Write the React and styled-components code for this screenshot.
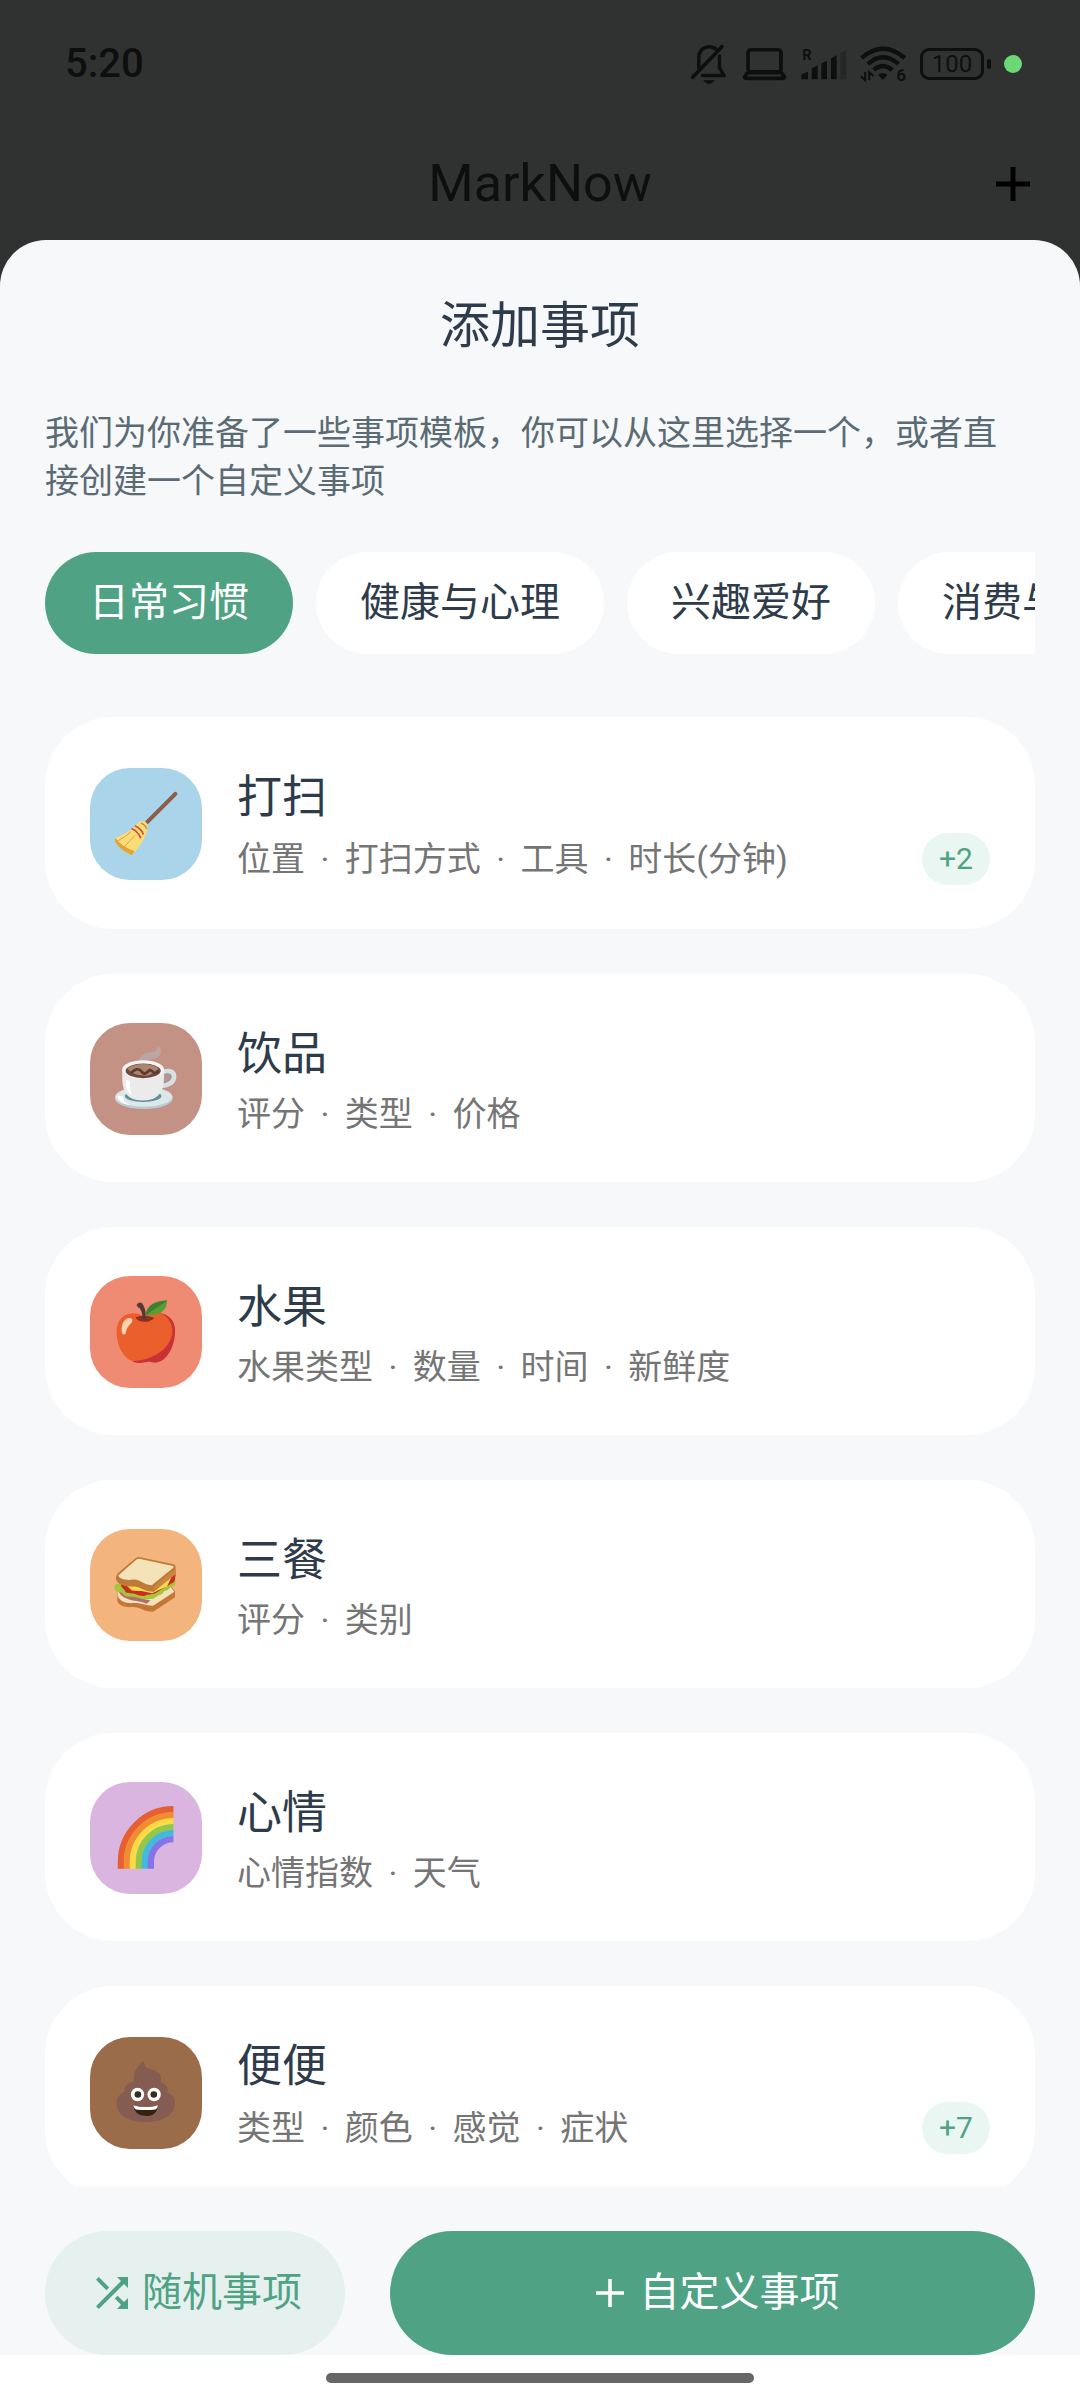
import React, { useState } from 'react';
import styled, { createGlobalStyle, ThemeProvider } from 'styled-components';

const theme = {
  backdrop: '#303231',
  ink: '#0d0f0f',
  sheet: '#f6f8fa',
  card: '#ffffff',
  text: '#2d3b4a',
  note: '#5b6b74',
  muted: '#757575',
  green: '#4fa384',
  greenSoft: '#e6f1ef',
  greenPale: '#eaf6f2',
};

const GlobalStyle = createGlobalStyle`
  * {
    box-sizing: border-box;
    margin: 0;
    padding: 0;
  }

  body {
    font-family: Roboto, 'Noto Sans CJK SC', sans-serif;
    background: #ffffff;
  }

  button {
    border: none;
    background: none;
    font-family: inherit;
    color: inherit;
    cursor: pointer;
  }
`;

const Screen = styled.div`
  width: 100%;
  height: 100vh;
  overflow: hidden;

  display: flex;
  flex-direction: column;

  background: ${(props) => props.theme.backdrop};
  color: ${(props) => props.theme.ink};
`;

const StatusBar = styled.div`
  flex: none;
  height: 128px;
  padding: 0 58px 0 65px;

  display: flex;
  align-items: center;
  justify-content: space-between;
`;

const Clock = styled.time`
  font-size: 40px;
  font-weight: 500;
  line-height: 48px;
`;

const StatusIcons = styled.div`
  display: flex;
  align-items: center;
  gap: 13px;

  svg {
    display: block;
    overflow: visible;
  }
`;

const Battery = styled.div`
  display: flex;
  align-items: center;
  gap: 3px;
`;

const BatteryBody = styled.span`
  width: 64px;
  height: 32px;
  border: 3px solid ${(props) => props.theme.ink};
  border-radius: 9px;

  display: flex;
  align-items: center;
  justify-content: center;

  font-size: 24px;
  line-height: 24px;
`;

const BatteryTip = styled.span`
  width: 4px;
  height: 10px;
  border-radius: 2px;
  background: ${(props) => props.theme.ink};
`;

const ActiveDot = styled.span`
  width: 18px;
  height: 18px;
  border-radius: 50%;
  background: #6bd775;
`;

const AppBar = styled.header`
  flex: none;
  height: 112px;
  padding: 0 43px;

  display: grid;
  grid-template-columns: 1fr auto 1fr;
  align-items: center;

  h1 {
    grid-column: 2;
    font-size: 52px;
    font-weight: 400;
    line-height: 64px;
  }
`;

const AppBarButton = styled.button`
  justify-self: end;
  width: 48px;
  height: 48px;
  color: #000000;

  svg {
    display: block;
  }
`;

const Sheet = styled.main`
  flex: 1;
  min-height: 0;
  padding: 56px 45px 0;
  border-radius: 46px 46px 0 0;

  display: flex;
  flex-direction: column;

  background: ${(props) => props.theme.sheet};
  color: ${(props) => props.theme.text};
`;

const SheetTitle = styled.h2`
  font-size: 50px;
  font-weight: 400;
  line-height: 60px;
  text-align: center;
`;

const SheetNote = styled.p`
  margin-top: 53px;
  padding-right: 8px;

  font-size: 34px;
  line-height: 48px;
  color: ${(props) => props.theme.note};
`;

const Chips = styled.div`
  flex: none;
  margin-top: 47px;

  display: flex;
  gap: 23px;
  overflow-x: auto;
  scrollbar-width: none;
`;

const Chip = styled.button`
  flex: none;
  height: 102px;
  padding: 0 44px;
  border-radius: 51px;

  font-size: 40px;
  line-height: 48px;
  white-space: nowrap;
  color: ${(props) => (props.$active ? '#ffffff' : props.theme.text)};
  background: ${(props) => (props.$active ? props.theme.green : props.theme.card)};
`;

const TemplateList = styled.ul`
  flex: 1;
  min-height: 0;
  margin-top: 63px;

  display: flex;
  flex-direction: column;
  gap: 45px;
  overflow-y: auto;
  scrollbar-width: none;
  list-style: none;
`;

const Card = styled.button`
  width: 100%;
  padding: 46px 45px 44px;
  border-radius: 68px;

  display: flex;
  align-items: center;
  gap: 35px;

  background: ${(props) => props.theme.card};
  text-align: left;
`;

const Tile = styled.span`
  flex: none;
  width: 112px;
  height: 112px;
  border-radius: 40px;
  overflow: hidden;
  background: ${(props) => props.$color};

  svg {
    display: block;
  }
`;

const CardBody = styled.span`
  flex: 1;
  min-width: 0;

  display: flex;
  flex-direction: column;
`;

const CardTitle = styled.span`
  font-size: 45px;
  line-height: 70px;
  color: ${(props) => props.theme.text};
`;

const CardRow = styled.span`
  display: flex;
  align-items: center;
  justify-content: space-between;
`;

const Fields = styled.span`
  font-size: 34px;
  line-height: 48px;
  color: ${(props) => props.theme.muted};
`;

const Dot = styled.span`
  padding: 0 7px;
`;

const More = styled.span`
  min-width: 68px;
  height: 52px;
  padding: 0 16px;
  border-radius: 26px;

  display: flex;
  align-items: center;
  justify-content: center;

  font-size: 30px;
  line-height: 36px;
  color: ${(props) => props.theme.green};
  background: ${(props) => props.theme.greenPale};
`;

const Actions = styled.div`
  flex: none;
  margin-top: 45px;

  display: flex;
  gap: 45px;
`;

const ActionButton = styled.button`
  flex: ${(props) => (props.$primary ? '1' : 'none')};
  height: 124px;
  padding: 0 43px;
  border-radius: 62px;

  display: flex;
  align-items: center;
  justify-content: center;
  gap: 6px;

  font-size: 40px;
  line-height: 48px;
  color: ${(props) => (props.$primary ? '#ffffff' : props.theme.green)};
  background: ${(props) => (props.$primary ? props.theme.green : props.theme.greenSoft)};
`;

const GestureBar = styled.div`
  flex: none;
  height: 45px;

  display: flex;
  align-items: center;
  justify-content: center;
  background: #ffffff;

  span {
    width: 428px;
    height: 10px;
    border-radius: 5px;
    background: #666666;
  }
`;

const BellOff = () => (
  <svg width='39' height='39' viewBox='36 45 115 115' fill='none' stroke='currentColor' strokeWidth='10'>
    <path d='M59 112V82c0-19 13-32 31-32 9 0 16 3 22 9' strokeLinecap='round' />
    <path d='M120 77v35l14 23H70' strokeLinecap='round' strokeLinejoin='round' />
    <path d='M41 140L127 50' strokeWidth='11' strokeLinecap='round' />
    <path d='M72 149h34c-4 7-10 10-17 10s-13-3-17-10z' fill='currentColor' stroke='none' />
  </svg>
);

const Laptop = () => (
  <svg width='43' height='32' viewBox='187 50 128 95' fill='none' stroke='currentColor' strokeWidth='11'>
    <rect x='202' y='55' width='98' height='66' rx='9' />
    <path d='M201 123l-9 12q-1 5 4 5h110q5 0 4-5l-9-12z' strokeLinejoin='round' />
  </svg>
);

const Signal = () => (
  <svg width='48' height='32' viewBox='356 52 144 95' fill='currentColor'>
    <text x='366' y='88' fontSize='44' fontWeight='700' fontFamily='Roboto, sans-serif'>
      R
    </text>
    <path d='M363 145v-14l20-8v22z' />
    <path d='M394 145v-33l18-9v42z' />
    <path d='M423 145V98l17-8v55z' />
    <path d='M452 145V82l17-9v72z' />
    <path d='M480 145V66l18-9v88z' opacity='0.3' />
  </svg>
);

const Wifi = () => (
  <svg width='47' height='36' viewBox='537 50 140 108' fill='none' stroke='currentColor' strokeWidth='13'>
    <path d='M541 86q64-56 130 0' />
    <path d='M560 104q46-41 92 0' />
    <path d='M578 122q27-24 55 0' />
    <path d='M591 136q14-10 28 0l-14 16z' fill='currentColor' stroke='none' />
    <path d='M552 128v25l-13-12M564 153v-25l13 12' strokeWidth='6' />
    <text x='645' y='156' fontSize='52' fontWeight='700' fontFamily='Roboto, sans-serif' fill='currentColor' stroke='none'>
      6
    </text>
  </svg>
);

const Plus = () => (
  <svg width='48' height='48' viewBox='0 0 24 24' fill='currentColor'>
    <path d='M19 12.9h-6.1V19h-1.8v-6.1H5v-1.8h6.1V5h1.8v6.1H19z' />
  </svg>
);

const BigPlus = () => (
  <svg width='48' height='48' viewBox='0 0 48 48' stroke='currentColor' strokeWidth='5'>
    <path d='M24 7v34M7 24h34' />
  </svg>
);

const Shuffle = () => (
  <svg width='48' height='48' viewBox='0 0 24 24' fill='currentColor'>
    <path d='M10.6 9.2L5.4 4 4 5.4l5.2 5.2zM14.5 4l2 2L4 18.6 5.4 20 18 7.5l2 2V4zm.3 9.4l-1.4 1.4 3.1 3.1-2 2.1H20v-5.5l-2 2z' />
  </svg>
);

const Broom = () => (
  <svg width='112' height='112' viewBox='30 51 337 337'>
    <path d='M287 129L202 214' stroke='#8d5c4b' strokeWidth='12' strokeLinecap='round' />
    <path d='M188 212q10-3 16 12-2 40-46 87-6 3-10-2-20-7-42-36-2-6 4-12 45-20 68-49z' fill='#fbdc78' />
    <path d='M106 261q20 28 58 40l-6 10q-6 2-10-2-24-9-43-36z' fill='#dfa636' />
    <path d='M132 290q18-22 34-36M114 270q24-12 40-28' stroke='#dba63c' strokeWidth='3' fill='none' />
    <path d='M155 233q18 7 28 29M165 225q19 9 26 26' stroke='#cf4b34' strokeWidth='5' fill='none' />
    <path d='M183 217q14 5 17 17' stroke='#b98a3c' strokeWidth='4' fill='none' />
  </svg>
);

const Coffee = () => (
  <svg width='112' height='112' viewBox='30 50 337 337'>
    <path d='M178 162c4-24 30-20 46-26 10-5 6-12 10-16 10 2 12 17 6 27-8 14-28 12-62 15z' fill='#b9a7a3' />
    <ellipse cx='192' cy='277' rx='87' ry='32' fill='#b9cbd2' />
    <ellipse cx='192' cy='272' rx='86' ry='30' fill='#dde6e9' />
    <path d='M112 268q3 24 38 29-22-12-20-26z' fill='#ffffff' />
    <ellipse cx='190' cy='270' rx='55' ry='18' fill='#5c9298' />
    <path d='M246 202c10-10 36-12 37 8 0 20-18 28-38 29' fill='none' stroke='#dadfe1' strokeWidth='14' />
    <path d='M252 206c8-4 20-4 21 5-1 10-12 16-22 18' fill='none' stroke='#83a6ac' strokeWidth='4' />
    <path d='M127 192c0 44-2 91 62 91s64-47 64-91z' fill='#ebebeb' />
    <path d='M138 220q-2 38 18 48-8-22-6-43z' fill='#ffffff' />
    <ellipse cx='190' cy='190' rx='63' ry='28' fill='#f5f5f5' />
    <ellipse cx='190' cy='194' rx='53' ry='22' fill='#70483b' />
    <path d='M142 187q18-14 46-14 34 0 48 14-14 18-36 22-40 0-58-22z' fill='#aa8570' />
    <path d='M154 200c14-14 24-14 32-3s16 2 24-6c10 2 8 16 26 4' fill='none' stroke='#5e3b31' strokeWidth='8' />
  </svg>
);

const Apple = () => (
  <svg width='112' height='112' viewBox='30 44 337 337'>
    <path d='M196 166c34-22 90-10 90 42 0 48-24 88-50 95-16 5-22-3-34 0-16 4-34 3-44-2z' fill='#c93135' />
    <path d='M196 166c-44-24-86-4-86 46 0 50 28 86 50 88 60-1 116-40 118-88 0-30-16-46-34-55-18-6-36 1-48 9z' fill='#ea5f2c' />
    <path d='M166 168q26-10 58 2-14 12-31 12-18 0-27-14z' fill='#8e2f20' />
    <path d='M197 178q4-32-10-52l-15 4q17 20 17 46z' fill='#523a36' />
    <path d='M170 131q4-8 14-7l4 9-12 7z' fill='#523a36' />
    <path d='M198 162c2-28 24-44 64-44-1 30-18 46-64 44z' fill='#5b9d35' />
    <path d='M198 162c16-14 38-22 64-44-25 1-60 10-64 44z' fill='#3d7f35' />
    <path d='M126 214c-4-22 6-42 22-44 12 0 12 11 4 18-9 8-13 19-15 29-3 5-9 4-11-3z' fill='#fdd3ae' />
  </svg>
);

const Sandwich = () => (
  <svg width='112' height='112' viewBox='30 39 337 337'>
    <path d='M113 232l155-26 18 20v18l-66 44c-28 1-40-15-62-14-24 2-42-5-46-18z' fill='#c47835' />
    <path d='M114 228l150-24 20 24-64 42c-24-1-40-10-60-8-22 1-40-4-46-22z' fill='#f7e1bd' />
    <path d='M116 226q36 10 52 16t44 12l-12 10q-16-8-42-10-32-6-42-26z' fill='#b56a6d' />
    <path d='M103 212c2-10 16-10 20-6l162-12c6 8 1 16-6 17-10 2-10 12-22 14-8 2-6 12-18 13-10 2-14 12-28 12-20 4-40-7-58-8-16 3-22-5-28-12-12 2-22-6-22-18z' fill='#a5c639' />
    <path d='M124 206l164-30-4 22-60 36-30 4-56-8z' fill='#c92d22' />
    <path d='M134 204l140-18-12 26-28 12-16 8-30-6-32-2z' fill='#fbd94d' />
    <path d='M158 228q20-6 42 4l-4 8q-26 2-38-12zM122 206l16 4 8 14q-20-2-24-18z' fill='#c92d22' />
    <path d='M181 124l101 21q8 4 5 13l1 16-66 54c-28 0-42-17-62-16-30 1-52-10-52-25 0-8 5-14 9-18l50-42q7-5 14-3z' fill='#bf7938' />
    <path d='M182 129l98 21q3 3 0 6l-64 52c-26-1-34-18-56-17-20 4-40-1-45-12l53-47q7-5 14-3z' fill='#f4e2b9' />
    <path d='M222 212l66-54v17l-66 50z' fill='#cc8641' />
  </svg>
);

const Rainbow = () => {
  const bands = ['#e65e32', '#f28c31', '#fddb46', '#93c84d', '#42bade', '#8474e8'];

  return (
    <svg width='112' height='112' viewBox='30 33 337 337'>
      {bands.map((color, i) => {
        const r = 158 - i * 18;
        return (
          <path
            key={color}
            d={`M${281 - r} 294V273A${r} ${r} 0 0 1 281 ${273 - r}`}
            fill='none'
            stroke={color}
            strokeWidth='19'
          />
        );
      })}
    </svg>
  );
};

const Poop = () => (
  <svg width='112' height='112' viewBox='30 47 337 337'>
    <path
      d='M188 120c8 2 4 12 12 18 12 8 42 8 44 32 0 7 0 10-2 14 18 4 24 16 20 30 18 6 25 18 24 33-2 40-46 56-88 56s-86-14-88-56c0-18 8-28 25-36-4-16 7-28 27-30-4-36 16-46 26-61z'
      fill='#855c52'
    />
    <circle cx='173' cy='220' r='20' fill='#ffffff' />
    <circle cx='223' cy='220' r='20' fill='#ffffff' />
    <circle cx='174' cy='220' r='10' fill='#3b2a1d' />
    <circle cx='222' cy='220' r='10' fill='#3b2a1d' />
    <path d='M160 252q38 12 75 0-4 33-37 33-34-1-38-33z' fill='#35230f' />
    <path d='M160 252q38 12 75 0-2 10-8 13-28 4-59 0-6-5-8-13z' fill='#ffffff' />
  </svg>
);

const categories = ['日常习惯', '健康与心理', '兴趣爱好', '消费与购物'];

const templates = [
  { title: '打扫', fields: ['位置', '打扫方式', '工具', '时长(分钟)'], more: 2, color: '#aad4ea', Icon: Broom },
  { title: '饮品', fields: ['评分', '类型', '价格'], color: '#c39285', Icon: Coffee },
  { title: '水果', fields: ['水果类型', '数量', '时间', '新鲜度'], color: '#f08b73', Icon: Apple },
  { title: '三餐', fields: ['评分', '类别'], color: '#f3b47d', Icon: Sandwich },
  { title: '心情', fields: ['心情指数', '天气'], color: '#dab5e0', Icon: Rainbow },
  { title: '便便', fields: ['类型', '颜色', '感觉', '症状'], more: 7, color: '#9b6c49', Icon: Poop },
];

function TemplateCard({ title, fields, more, color, Icon }) {
  return (
    <li>
      <Card type='button'>
        <Tile $color={color}>
          <Icon />
        </Tile>
        <CardBody>
          <CardTitle>{title}</CardTitle>
          <CardRow>
            <Fields>
              {fields.map((field, i) => (
                <React.Fragment key={field}>
                  {i > 0 && <Dot> · </Dot>}
                  {field}
                </React.Fragment>
              ))}
            </Fields>
            {more && <More>+{more}</More>}
          </CardRow>
        </CardBody>
      </Card>
    </li>
  );
}

export default function App() {
  const [active, setActive] = useState(categories[0]);

  return (
    <ThemeProvider theme={theme}>
      <GlobalStyle />
      <Screen>
        <StatusBar>
          <Clock>5:20</Clock>
          <StatusIcons>
            <BellOff />
            <Laptop />
            <Signal />
            <Wifi />
            <Battery>
              <BatteryBody>100</BatteryBody>
              <BatteryTip />
            </Battery>
            <ActiveDot />
          </StatusIcons>
        </StatusBar>
        <AppBar>
          <h1>MarkNow</h1>
          <AppBarButton type='button' aria-label='添加'>
            <BigPlus />
          </AppBarButton>
        </AppBar>
        <Sheet>
          <SheetTitle>添加事项</SheetTitle>
          <SheetNote>我们为你准备了一些事项模板，你可以从这里选择一个，或者直接创建一个自定义事项</SheetNote>
          <Chips>
            {categories.map((name) => (
              <Chip
                key={name}
                type='button'
                aria-pressed={name === active}
                $active={name === active}
                onClick={() => setActive(name)}
              >
                {name}
              </Chip>
            ))}
          </Chips>
          <TemplateList>
            {templates.map((item) => (
              <TemplateCard key={item.title} {...item} />
            ))}
          </TemplateList>
          <Actions>
            <ActionButton type='button'>
              <Shuffle />
              随机事项
            </ActionButton>
            <ActionButton type='button' $primary>
              <Plus />
              自定义事项
            </ActionButton>
          </Actions>
        </Sheet>
        <GestureBar>
          <span />
        </GestureBar>
      </Screen>
    </ThemeProvider>
  );
}
